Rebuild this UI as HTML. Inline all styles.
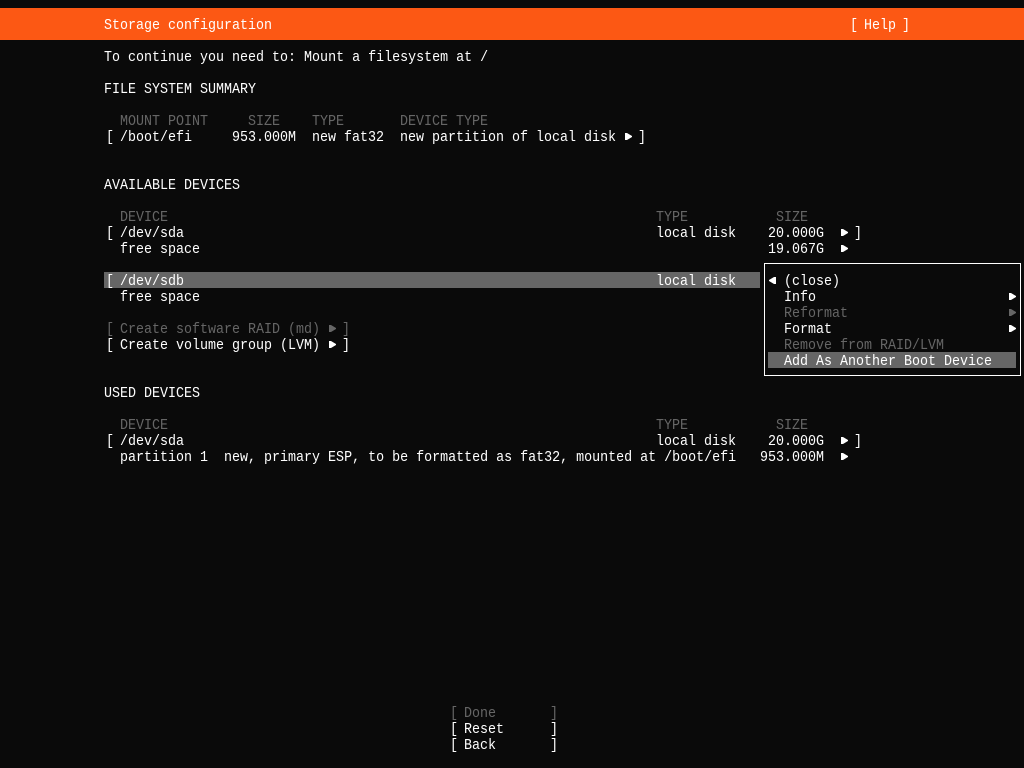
<!DOCTYPE html>
<html><head><meta charset="utf-8"><style>
html,body{margin:0;padding:0;background:#0a0a0a;}
#p{position:relative;width:1024px;height:768px;overflow:hidden;background:#0a0a0a;color:#fff;font-family:"Liberation Mono",monospace;font-size:15px;line-height:16px;}
.t{position:absolute;white-space:pre;height:16px;line-height:20px;transform:scaleX(.889);transform-origin:0 0;}
.d{color:#666;}
.b{position:absolute;}
.a{position:absolute;width:7px;height:7px;background:#fff;clip-path:polygon(0 0,2px 0,7px 3px,7px 4px,2px 7px,0 7px);}
.l{clip-path:polygon(100% 0,5px 0,0 3px,0 4px,5px 7px,100% 7px);}
.ad{background:#666;}
</style></head><body><div id="p">
<div class="b" style="left:0;top:8px;width:1024px;height:32px;background:#fc5814"></div>
<div class="t" style="left:104px;top:16px">Storage configuration</div>
<div class="t" style="left:850px;top:16px">[</div>
<div class="t" style="left:864px;top:16px">Help</div>
<div class="t" style="left:902px;top:16px">]</div>
<div class="t" style="left:104px;top:48px">To continue you need to: Mount a filesystem at /</div>
<div class="t" style="left:104px;top:80px">FILE SYSTEM SUMMARY</div>

<div class="t d" style="left:120px;top:112px">MOUNT POINT</div>
<div class="t d" style="left:248px;top:112px">SIZE</div>
<div class="t d" style="left:312px;top:112px">TYPE</div>
<div class="t d" style="left:400px;top:112px">DEVICE TYPE</div>
<div class="t" style="left:106px;top:128px">[</div>
<div class="t" style="left:120px;top:128px">/boot/efi</div>
<div class="t" style="left:232px;top:128px">953.000M</div>
<div class="t" style="left:312px;top:128px">new fat32</div>
<div class="t" style="left:400px;top:128px">new partition of local disk</div>
<div class="a" style="left:625px;top:133px"></div>
<div class="t" style="left:638px;top:128px">]</div>

<div class="t" style="left:104px;top:176px">AVAILABLE DEVICES</div>
<div class="t d" style="left:120px;top:208px">DEVICE</div>
<div class="t d" style="left:656px;top:208px">TYPE</div>
<div class="t d" style="left:776px;top:208px">SIZE</div>
<div class="t" style="left:106px;top:224px">[</div>
<div class="t" style="left:120px;top:224px">/dev/sda</div>
<div class="t" style="left:656px;top:224px">local disk</div>
<div class="t" style="left:768px;top:224px">20.000G</div>
<div class="a" style="left:841px;top:229px"></div>
<div class="t" style="left:854px;top:224px">]</div>
<div class="t" style="left:120px;top:240px">free space</div>
<div class="t" style="left:768px;top:240px">19.067G</div>
<div class="a" style="left:841px;top:245px"></div>

<div class="b" style="left:104px;top:272px;width:656px;height:16px;background:#666"></div>
<div class="t" style="left:106px;top:272px">[</div>
<div class="t" style="left:120px;top:272px">/dev/sdb</div>
<div class="t" style="left:656px;top:272px">local disk</div>
<div class="t" style="left:120px;top:288px">free space</div>

<div class="t d" style="left:106px;top:320px">[</div>
<div class="t d" style="left:120px;top:320px">Create software RAID (md)</div>
<div class="a ad" style="left:329px;top:325px"></div>
<div class="t d" style="left:342px;top:320px">]</div>
<div class="t" style="left:106px;top:336px">[</div>
<div class="t" style="left:120px;top:336px">Create volume group (LVM)</div>
<div class="a" style="left:329px;top:341px"></div>
<div class="t" style="left:342px;top:336px">]</div>

<div class="t" style="left:104px;top:384px">USED DEVICES</div>
<div class="t d" style="left:120px;top:416px">DEVICE</div>
<div class="t d" style="left:656px;top:416px">TYPE</div>
<div class="t d" style="left:776px;top:416px">SIZE</div>
<div class="t" style="left:106px;top:432px">[</div>
<div class="t" style="left:120px;top:432px">/dev/sda</div>
<div class="t" style="left:656px;top:432px">local disk</div>
<div class="t" style="left:768px;top:432px">20.000G</div>
<div class="a" style="left:841px;top:437px"></div>
<div class="t" style="left:854px;top:432px">]</div>
<div class="t" style="left:120px;top:448px">partition 1  new, primary ESP, to be formatted as fat32, mounted at /boot/efi</div>
<div class="t" style="left:760px;top:448px">953.000M</div>
<div class="a" style="left:841px;top:453px"></div>

<div class="b" style="left:764px;top:263px;width:255px;height:111px;border:1px solid #fff;background:#0a0a0a"></div>
<div class="b" style="left:768px;top:352px;width:248px;height:16px;background:#666"></div>
<div class="a l" style="left:769px;top:277px"></div>
<div class="t" style="left:784px;top:272px">(close)</div>
<div class="t" style="left:784px;top:288px">Info</div>
<div class="a" style="left:1009px;top:293px"></div>
<div class="t d" style="left:784px;top:304px">Reformat</div>
<div class="a ad" style="left:1009px;top:309px"></div>
<div class="t" style="left:784px;top:320px">Format</div>
<div class="a" style="left:1009px;top:325px"></div>
<div class="t d" style="left:784px;top:336px">Remove from RAID/LVM</div>
<div class="t" style="left:784px;top:352px">Add As Another Boot Device</div>

<div class="t d" style="left:450px;top:704px">[</div>
<div class="t d" style="left:464px;top:704px">Done</div>
<div class="t d" style="left:550px;top:704px">]</div>
<div class="t" style="left:450px;top:720px">[</div>
<div class="t" style="left:464px;top:720px">Reset</div>
<div class="t" style="left:550px;top:720px">]</div>
<div class="t" style="left:450px;top:736px">[</div>
<div class="t" style="left:464px;top:736px">Back</div>
<div class="t" style="left:550px;top:736px">]</div>
</div></body></html>
